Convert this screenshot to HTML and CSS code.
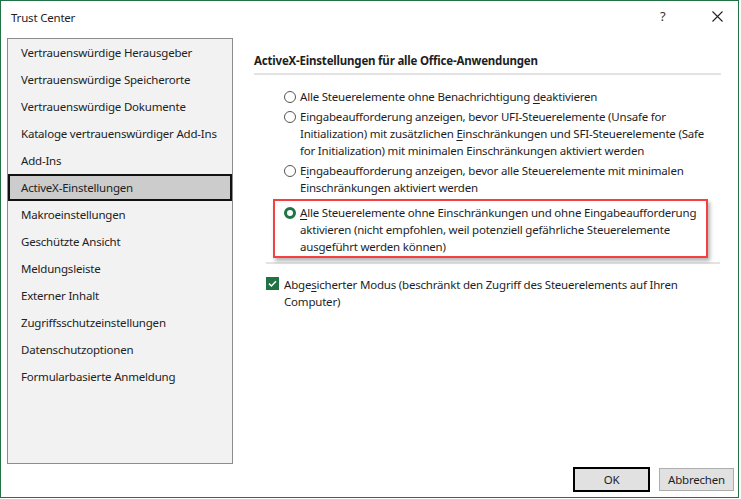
FILE: index.html
```html
<!DOCTYPE html>
<html>
<head>
<meta charset="utf-8">
<title>Trust Center</title>
<link rel="stylesheet" href="styles.css">
</head>
<body>

<div id="dialog">
    <header>
        <span class="title">Trust Center</span>
        <span class="help">?</span>
        <span class="close">
            <svg width="11" height="11" viewBox="0 0 11 11"><path d="M0.5 0.5 L10.5 10.5 M10.5 0.5 L0.5 10.5" stroke="#222" stroke-width="1.1" fill="none"/></svg>
        </span>
    </header>

    <div id="main">
        <ul id="nav">
            <li>Vertrauenswürdige Herausgeber</li>
            <li>Vertrauenswürdige Speicherorte</li>
            <li>Vertrauenswürdige Dokumente</li>
            <li>Kataloge vertrauenswürdiger Add-Ins</li>
            <li>Add-Ins</li>
            <li class="on">ActiveX-Einstellungen</li>
            <li>Makroeinstellungen</li>
            <li>Geschützte Ansicht</li>
            <li>Meldungsleiste</li>
            <li>Externer Inhalt</li>
            <li>Zugriffsschutzeinstellungen</li>
            <li>Datenschutzoptionen</li>
            <li>Formularbasierte Anmeldung</li>
        </ul>

        <div id="content">
            <h2>ActiveX-Einstellungen für alle Office-Anwendungen</h2>
            <div class="sep"></div>

            <div class="options">
                <div class="opt">
                    <span class="radio"></span>
                    <span class="text">Alle Steuerelemente ohne Benachrichtigung <u>d</u>eaktivieren</span>
                </div>
                <div class="opt">
                    <span class="radio"></span>
                    <span class="text">Eingabeaufforderung anzeigen, bevor UFI-Steuerelemente (Unsafe for<br>Initialization) mit zusätzlichen <u>E</u>inschränkungen und SFI-Steuerelemente (Safe<br>for Initialization) mit minimalen Einschränkungen aktiviert werden</span>
                </div>
                <div class="opt">
                    <span class="radio"></span>
                    <span class="text">E<u>i</u>ngabeaufforderung anzeigen, bevor alle Steuerelemente mit minimalen<br>Einschränkungen aktiviert werden</span>
                </div>
                <div class="opt last">
                    <span class="radio checked"></span>
                    <span class="text"><u>A</u>lle Steuerelemente ohne Einschränkungen und ohne Eingabeaufforderung<br>aktivieren (nicht empfohlen, weil potenziell gefährliche Steuerelemente<br>ausgeführt werden können)</span>
                    <span class="marker"></span>
                </div>
            </div>

            <div class="sep sep-2"></div>

            <div class="check-row">
                <span class="check">
                    <svg width="13" height="13" viewBox="0 0 13 13"><path d="M3 6.6 L5.4 9 L10 4.2" stroke="#fff" stroke-width="1.5" fill="none"/></svg>
                </span>
                <span class="text">Abge<u>s</u>icherter Modus (beschränkt den Zugriff des Steuerelements auf Ihren<br>Computer)</span>
            </div>
        </div>
    </div>

    <footer>
        <button class="default">OK</button>
        <button>Abbrechen</button>
    </footer>
</div>

</body>
</html>
```

FILE: styles.css
```css
html, body { margin: 0; padding: 0; background-color: #FFF; font: normal 11.5px/17px 'Noto Sans', 'Open Sans', sans-serif; letter-spacing: -0.2px; color: #1E1E1E; }
ul { margin: 0; padding: 0; }
li { list-style-type: none; }
u { text-underline-offset: 2px; }

#dialog { box-sizing: border-box; width: 739px; height: 498px; border: 1px solid #217346; display: flex; flex-direction: column; }

header { height: 31px; display: flex; align-items: center; padding: 0 0 0 10px; }
header .title { flex: 1; margin-top: 1px; }
header .help  { width: 12px; margin-right: 40px; font-size: 13px; color: #333; }
header .close { width: 11px; height: 11px; margin-right: 15px; margin-top: -1px; }
header .close svg { display: block; }

#main { flex: 1; display: flex; }

#nav { box-sizing: border-box; width: 226px; height: 426px; margin: 6px 0 0 6px; border: 1px solid #8C8C8C; background-color: #F2F2F2; }
#nav li { height: 27px; line-height: 27px; padding-left: 13px; white-space: nowrap; color: #222; }
#nav li.on { background-color: #CCC; outline: 2px solid #111; outline-offset: -2px; }

#content { width: 467px; margin-left: 21px; padding-top: 20px; }
#content h2 { margin: 0; font-size: 11.5px; font-weight: 700; line-height: 17px; }

.sep { height: 2px; margin-top: 4px; background-color: #E3E3E3; }
.sep-2 { margin: 7px 1px 0 12px; }

.options { margin-top: 13px; padding-left: 30px; }
.opt { position: relative; display: flex; margin-top: 3px; }
.opt:first-child { margin-top: 0; }
.opt.last { margin-top: 8px; }
.opt .text { white-space: nowrap; margin-left: 4px; }

.radio { box-sizing: border-box; flex: none; width: 12px; height: 12px; margin-top: 3px; border: 1px solid #555; border-radius: 50%; background-color: #FFF; }
.radio.checked { border: 3px solid #217346; }

.marker { position: absolute; left: -11px; top: -5px; width: 431px; height: 55px; border: 2px solid #F44040; box-shadow: 2px 3px 4px rgba(0,0,0,0.3); pointer-events: none; }

.check-row { display: flex; margin-top: 12px; padding-left: 12px; }
.check-row .text { white-space: nowrap; margin-left: 5px; }
.check { flex: none; width: 13px; height: 13px; margin-top: 1px; background-color: #217346; }
.check svg { display: block; }

footer { display: flex; justify-content: flex-end; gap: 10px; padding: 4px 4px 6px 0; }
button { box-sizing: border-box; width: 75px; height: 23px; padding: 0; border: 1px solid #ADADAD; background-color: #E1E1E1; font: normal 11.5px 'Noto Sans', 'Open Sans', sans-serif; letter-spacing: -0.2px; color: #1E1E1E; }
button.default { border-color: #000; outline: 1px solid #000; }
```
